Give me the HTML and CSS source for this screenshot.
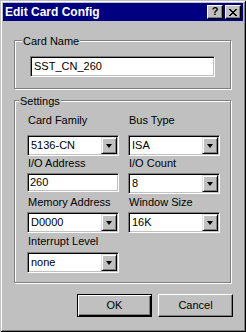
FILE: index.html
```html
<!DOCTYPE html>
<html lang="en">
<head>
    <meta charset="UTF-8">
    <title>Edit Card Config</title>
    <link rel="stylesheet" href="styles.css">
</head>
<body>
    <div class="window">
        <div class="titlebar">
            <span class="title">Edit Card Config</span>
            <div class="caption-btns">
                <div class="cap-btn help">?</div>
                <div class="cap-btn close">
                    <svg width="8" height="7" viewBox="0 0 8 7" shape-rendering="crispEdges">
                        <path d="M0 0h2v1h-2z M6 0h2v1h-2z M1 1h2v1h-2z M5 1h2v1h-2z M2 2h4v1h-4z M3 3h2v1h-2z M2 4h4v1h-4z M1 5h2v1h-2z M5 5h2v1h-2z M0 6h2v1h-2z M6 6h2v1h-2z" fill="#000"/>
                    </svg>
                </div>
            </div>
        </div>

        <div class="client">
            <div class="group group-name">
                <div class="legend">Card Name</div>
                <div class="field edit tall">SST_CN_260</div>
            </div>

            <div class="group group-settings">
                <div class="legend">Settings</div>
                <div class="grid">
                    <div class="cell r1">
                        <div class="label">Card Family</div>
                        <div class="field combo"><span class="value">5136-CN</span><span class="drop"></span></div>
                    </div>
                    <div class="cell r1">
                        <div class="label">Bus Type</div>
                        <div class="field combo"><span class="value">ISA</span><span class="drop"></span></div>
                    </div>
                    <div class="cell r2">
                        <div class="label">I/O Address</div>
                        <div class="field edit">260</div>
                    </div>
                    <div class="cell r2">
                        <div class="label">I/O Count</div>
                        <div class="field combo"><span class="value">8</span><span class="drop"></span></div>
                    </div>
                    <div class="cell r3">
                        <div class="label">Memory Address</div>
                        <div class="field combo"><span class="value">D0000</span><span class="drop"></span></div>
                    </div>
                    <div class="cell r3">
                        <div class="label">Window Size</div>
                        <div class="field combo"><span class="value">16K</span><span class="drop"></span></div>
                    </div>
                    <div class="cell r4">
                        <div class="label">Interrupt Level</div>
                        <div class="field combo"><span class="value">none</span><span class="drop"></span></div>
                    </div>
                </div>
            </div>

            <div class="buttons">
                <div class="btn default">OK</div>
                <div class="btn">Cancel</div>
            </div>
        </div>
    </div>
</body>
</html>
```

FILE: styles.css
```css
body {
    margin: 0;
    background: #c0c0c0;
    font-family: "Liberation Sans", Arial, sans-serif;
    font-size: 11px;
    line-height: 13px;
    color: #000;
}
.window {
    width: 246px;
    height: 332px;
    box-sizing: border-box;
    padding: 3px;
    background: #c0c0c0;
    box-shadow: inset 1px 1px #c0c0c0, inset -1px -1px #000, inset 2px 2px #fff, inset -2px -2px #808080;
}
.titlebar {
    height: 18px;
    background: #000080;
    display: flex;
    align-items: center;
    justify-content: space-between;
    padding: 0 2px;
}
.title {
    color: #fff;
    font-weight: bold;
    font-size: 12px;
    line-height: 14px;
}
.caption-btns {
    display: flex;
    gap: 2px;
}
.cap-btn {
    width: 16px;
    height: 14px;
    box-sizing: border-box;
    background: #c0c0c0;
    border: 1px solid;
    border-color: #fff #000 #000 #fff;
    box-shadow: inset -1px -1px #808080;
    display: flex;
    align-items: center;
    justify-content: center;
}
.help {
    font-weight: bold;
    font-size: 11px;
    line-height: 11px;
    padding-bottom: 1px;
}
.client {
    padding: 19px 12px 0 11px;
}
.group {
    border: 1px solid #808080;
    box-shadow: inset 1px 1px #fff, 1px 1px #fff;
}
.legend {
    width: fit-content;
    margin: -6px 0 0 -8px;
    padding: 0 1px;
    background: #c0c0c0;
}
.group-name {
    padding: 0 15px 11px 15px;
}
.group-settings {
    margin-top: 11px;
    padding: 0 10px 9px 12px;
}
.field {
    box-sizing: border-box;
    background: #fff;
    border: 1px solid;
    border-color: #808080 #fff #fff #808080;
    box-shadow: inset 1px 1px #000, inset -1px -1px #c0c0c0;
    padding: 1px;
    display: flex;
    align-items: center;
}
.edit {
    height: 19px;
    padding-left: 2px;
}
.edit.tall {
    height: 21px;
    margin-top: 8px;
    padding-left: 3px;
}
.combo {
    height: 21px;
}
.value {
    flex: 1;
    padding-left: 2px;
}
.drop {
    width: 16px;
    height: 17px;
    box-sizing: border-box;
    background: #c0c0c0;
    border: 1px solid;
    border-color: #dfdfdf #000 #000 #dfdfdf;
    box-shadow: inset 1px 1px #fff, inset -1px -1px #808080;
    display: flex;
    align-items: center;
    justify-content: center;
}
.drop::after {
    content: "";
    width: 0;
    height: 0;
    border-left: 3.5px solid transparent;
    border-right: 3.5px solid transparent;
    border-top: 4px solid #000;
}
.grid {
    display: grid;
    grid-template-columns: 92px 92px;
    column-gap: 9px;
    margin-top: 6px;
}
.cell {
    display: flex;
    flex-direction: column;
}
.label {
    padding-left: 1px;
    margin-bottom: 3px;
}
.r1 .label {
    margin-bottom: 8px;
}
.r2 {
    margin-top: 1px;
}
.r3 {
    margin-top: 2px;
}
.r4 {
    margin-top: 2px;
}
.r4 .label {
    margin-bottom: 4px;
}
.buttons {
    display: flex;
    justify-content: flex-end;
    gap: 6px;
    margin: 11px -2px 0 0;
}
.btn {
    width: 75px;
    height: 23px;
    box-sizing: border-box;
    border: 1px solid;
    border-color: #fff #000 #000 #fff;
    box-shadow: inset -1px -1px #808080;
    display: flex;
    align-items: center;
    justify-content: center;
}
.btn.default {
    border-color: #000;
    box-shadow: inset 1px 1px #fff, inset -1px -1px #000, inset -2px -2px #808080;
}
```
